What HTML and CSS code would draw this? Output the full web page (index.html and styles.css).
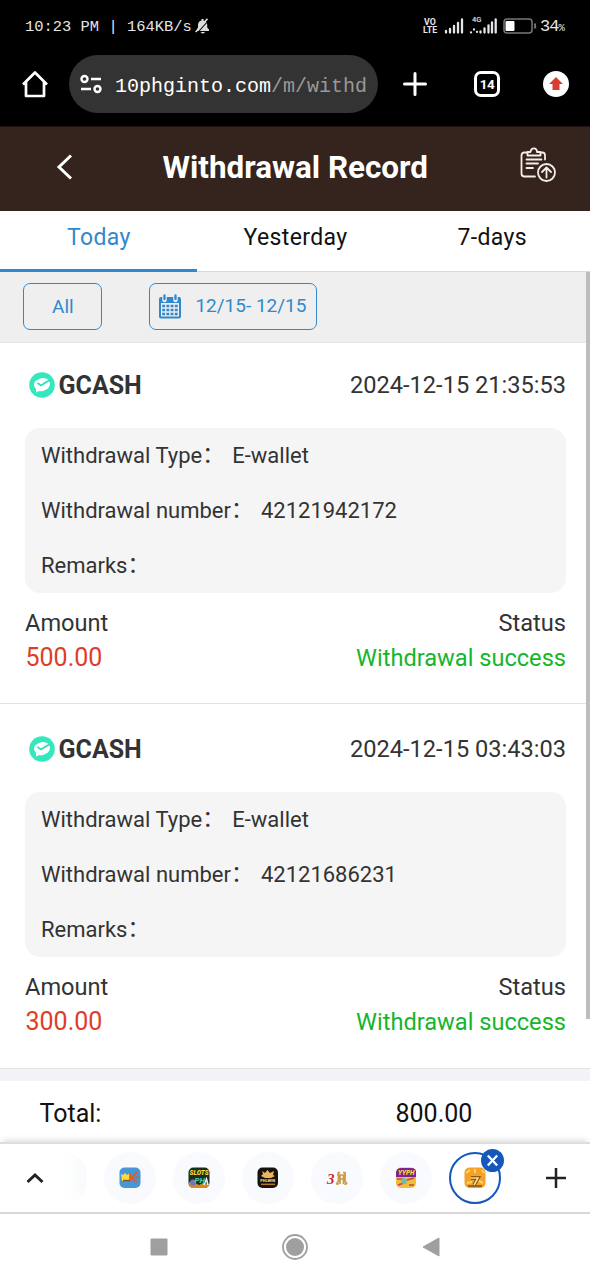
FILE: index.html
```html
<!DOCTYPE html>
<html lang="en">
<head>
<meta charset="utf-8">
<title>Withdrawal Record</title>
<link rel="stylesheet" href="styles.css">
</head>
<body>
<div class="phone">
  <div class="status">
    <span class="clock">10:23 PM | 164KB/s</span>
    <svg class="mute" width="15" height="17" viewBox="0 0 15 17"><path d="M2 13V11L3 9.500V6.500Q3.500 3 6.500 2.500V1H8.500V2.500Q12 3 12.200 6.500V9.500L14 11.500V13Z M5.500 14H10Q8 17 5.500 14Z" fill="#ddd"/><path d="M1.800 15.500L14 2" stroke="#000" stroke-width="1.100"/><path d="M.7 14L12.500 .8" stroke="#ddd" stroke-width="1.700"/></svg>
    <span class="volte"><span>VO</span><span>LTE</span></span>
    <svg class="signal" width="20" height="16" viewBox="0 0 20 16"><path d="M2 13v1.500M6 11v3.500M10 8v6.500M14 5v9.500M18 1.500v13" stroke="#e5e5e5" stroke-width="2.300" stroke-linecap="round"/></svg>
    <span class="data"><span class="gen">4G</span><svg width="28" height="16" viewBox="0 0 28 16"><path d="M2 14.300v.1M5 11.500v.1M8 13.800v.1M11.500 13.500v1M15.500 10.500v4M19.500 7.500v7M23 4.500v10M26.700 1.500v13" stroke="#e5e5e5" stroke-width="2.300" stroke-linecap="round"/></svg></span>
    <svg class="battery" width="34" height="16" viewBox="0 0 34 16"><rect x="1" y="1" width="28" height="14" rx="3" fill="none" stroke="#777" stroke-width="1.500"/><rect x="2.500" y="3" width="9" height="10" rx="1" fill="#fff"/><path d="M31.500 5.500Q33 8 31.500 10.500" fill="none" stroke="#777" stroke-width="1.800"/></svg>
    <span class="percent">34<small>%</small></span>
  </div>
  <div class="browser">
    <svg class="home" width="28" height="28" viewBox="0 0 28 28"><path d="M2 14.500L14 2.500L26 14.500M5 12V26H23V12" fill="none" stroke="#fff" stroke-width="2.700" stroke-linejoin="round"/></svg>
    <div class="url">
      <svg width="22" height="20" viewBox="0 0 22 20" fill="none" stroke="#fff" stroke-width="2.400"><circle cx="4.500" cy="5" r="3"/><path d="M11 5H21M1 15H11"/><circle cx="17.500" cy="15" r="3"/></svg>
      <span class="address">10phginto.com<span>/m/withd</span></span>
    </div>
    <svg class="newtab" width="24" height="24" viewBox="0 0 24 24"><path d="M12 1.500V22.500M1.500 12H22.500" stroke="#fff" stroke-width="3" stroke-linecap="round"/></svg>
    <span class="tabcount">14</span>
    <svg class="update" width="26" height="26" viewBox="0 0 26 26"><circle cx="13" cy="13" r="13" fill="#fff"/><path d="M13 6L20 13H16.500V19H9.500V13H6Z" fill="#d83c33"/></svg>
  </div>
  <header class="header">
    <svg class="back" width="18" height="28" viewBox="0 0 18 28"><path d="M16 2.500L4 14L16 25.500" fill="none" stroke="#fff" stroke-width="3"/></svg>
    <h1>Withdrawal Record</h1>
    <svg class="records" width="36" height="36" viewBox="0 0 36 36" fill="none" stroke="#f5eee8" stroke-width="1.800" stroke-linecap="round" stroke-linejoin="round"><path d="M7.500 5.500H4.500Q1.500 5.500 1.500 8.500V26.500Q1.500 29.500 4.500 29.500H15M20.500 5.500H22.500Q25 5.500 25 8.500V12.500M7.500 8.500V5H10.500Q11 1.300 14 1.300Q16.800 1.300 17 5H20.500V8.500ZM6.500 12.500H21.500M6.500 16.500H18M6.500 21H13"/><circle cx="26.500" cy="25.500" r="8.500"/><path d="M26.500 30.500V20.500M22 25L26.500 20.500L31 25"/></svg>
  </header>
  <nav class="tabs"><span class="active"><b>Today</b></span><span><b>Yesterday</b></span><span><b>7-days</b></span></nav>
  <div class="content">
    <div class="scrollthumb"></div>
    <div class="filters">
      <span class="filter all">All</span>
      <span class="filter date"><svg width="22" height="25" viewBox="0 0 22 25"><path d="M2 3H20Q22 3 22 5V22.500Q22 24.500 20 24.500H2Q0 24.500 0 22.500V5Q0 3 2 3Z" fill="#3189cc"/><path d="M2 9H20V22.500H2Z" fill="#efefef"/><path d="M5.500 1V6M16.500 1V6" stroke="#efefef" stroke-width="4.500" stroke-linecap="round"/><path d="M5.500 1.500V5M16.500 1.500V5" stroke="#3189cc" stroke-width="2.300" stroke-linecap="round"/><path d="M3.200 12H19M3.200 16H19M3.200 20H19" stroke="#3189cc" stroke-width="2.600" stroke-dasharray="2.900 1.300"/></svg><em>12/15- 12/15</em></span>
    </div>
    <section class="record">
      <div class="row top"><div class="brand"><svg width="28" height="28" viewBox="0 0 28 28"><circle cx="14" cy="14" r="12.800" fill="#35e7bd"/><path d="M8 21.500V18Q4.500 14 7 10.500Q14 4.500 20 8.500Q24 13.500 20 17.500Q15 21 11 20Z" fill="#fff"/><path d="M9.500 12L13 14.500L21 9.500" stroke="#35dcba" stroke-width="1.800" fill="none"/></svg><strong>GCASH</strong></div><time>2024-12-15 21:35:53</time></div>
      <div class="details"><div><span>Withdrawal Type</span><i>：</i><span>E-wallet</span></div><div><span>Withdrawal number</span><i>：</i><span>42121942172</span></div><div><span>Remarks</span><i>：</i></div></div>
      <div class="row captions"><span>Amount</span><span>Status</span></div>
      <div class="row result"><span class="amount">500.00</span><span class="success">Withdrawal success</span></div>
    </section>
    <section class="record">
      <div class="row top"><div class="brand"><svg width="28" height="28" viewBox="0 0 28 28"><circle cx="14" cy="14" r="12.800" fill="#35e7bd"/><path d="M8 21.500V18Q4.500 14 7 10.500Q14 4.500 20 8.500Q24 13.500 20 17.500Q15 21 11 20Z" fill="#fff"/><path d="M9.500 12L13 14.500L21 9.500" stroke="#35dcba" stroke-width="1.800" fill="none"/></svg><strong>GCASH</strong></div><time>2024-12-15 03:43:03</time></div>
      <div class="details"><div><span>Withdrawal Type</span><i>：</i><span>E-wallet</span></div><div><span>Withdrawal number</span><i>：</i><span>42121686231</span></div><div><span>Remarks</span><i>：</i></div></div>
      <div class="row captions"><span>Amount</span><span>Status</span></div>
      <div class="row result"><span class="amount">300.00</span><span class="success">Withdrawal success</span></div>
    </section>
    <div class="total"><span class="total-label">Total:</span><span>800.00</span></div>
  </div>
  <div class="strip">
    <svg class="expand" width="18" height="12" viewBox="0 0 18 12"><path d="M1.500 10L9 3L16.500 10" fill="none" stroke="#222" stroke-width="3"/></svg>
    <div class="sites">
      <span class="site cut"></span>
      <span class="site"><svg width="22" height="22" viewBox="0 0 22 22"><rect x=".5" y=".5" width="21" height="20.500" rx="5" fill="#4796d5"/><path d="M2 7L4 8L6 6L8 8L11 6V14H3Z" fill="#ffd83c"/><path d="M11 6V15M19 4L12 11L18 15M12 11L21 10" stroke="#e45b22" stroke-width="1.700" fill="none"/><path d="M4 13.500H11" stroke="#7b5132" stroke-width="1.300"/></svg></span>
      <span class="site"><svg width="22" height="22" viewBox="0 0 22 22"><rect x=".5" y=".5" width="21" height="20.500" rx="5" fill="#16301f"/><path d="M1 15L7 16L11 18L15 16L21 17V18Q20 21 17 21H5Q1 21 1 17Z" fill="#d18b26"/><circle cx="5" cy="15.500" r="3" fill="#7375ba"/><path d="M16 18L18.500 12L20 18" stroke="#eef" stroke-width="1.500" fill="none"/><text x="1.500" y="8" class="icon-yellow">SLOTS</text><text x="6.500" y="15.500" class="icon-green">PH</text></svg></span>
      <span class="site"><svg width="22" height="22" viewBox="0 0 22 22"><rect x=".5" y=".5" width="20.500" height="20.500" rx="5" fill="#17120d"/><path d="M5 4L8 6L10.500 3L13 6L17 4L16 8L18 9L14 11H8L4 9L6 7Z" fill="#edb45a"/><text x="3.200" y="15" class="icon-cream">PHLWIN</text><path d="M4 17.300H18" stroke="#b27826" stroke-width="1.500"/></svg></span>
      <span class="site"><svg width="22" height="22" viewBox="0 0 22 22"><text x="1" y="16.500" class="icon-red">3</text><path d="M11.500 5.500H14M17 5.500H19.500M11 8H20M12.500 5V14L10.500 17M14 8V17M17.500 8V17M19 5V14L21 17M10 17H13M18 17H21M14 12H17" fill="none" stroke="#c99c45" stroke-width="1.700"/></svg></span>
      <span class="site"><svg width="22" height="22" viewBox="0 0 22 22"><rect x="1" y=".5" width="20" height="20.500" rx="5" fill="#f0bf39"/><path d="M1 10V5Q2 1 6 1H16Q21 1 21 5V10Z" fill="#79258d"/><text x="3" y="8" class="icon-yellow">YYPH</text><path d="M2 12H9M12 13L19 11M3 18L9 16M14 18H19" stroke="#cb3e5b" stroke-width="1.700"/><circle cx="9" cy="14" r="3" fill="#7db5b2"/></svg></span>
      <span class="site selected"><svg width="22" height="22" viewBox="0 0 22 22"><rect x=".5" y=".5" width="21" height="20.500" rx="5" fill="#f4a128"/><path d="M2 6L6 3M11 2V6M18 3L20 6M3 16L8 15M15 14L19 16" stroke="#ffd56b" stroke-width="2"/><path d="M7 11H14L10 18" fill="none" stroke="#664018" stroke-width="3.500"/><path d="M7 11H14L10 18" fill="none" stroke="#ffdf83" stroke-width="1.700"/><path d="M4 19H18" stroke="#805220" stroke-width="1.500"/></svg><svg class="close" width="23" height="23" viewBox="0 0 23 23"><circle cx="11.500" cy="11.500" r="11.500" fill="#1457bd"/><path d="M6.800 6.500L16.200 16.500M16.200 6.500L6.800 16.500" stroke="#fff" stroke-width="2.300"/></svg></span>
    </div>
    <svg class="add" width="20" height="20" viewBox="0 0 20 20"><path d="M10 0V20M0 10H20" stroke="#222" stroke-width="2.500"/></svg>
  </div>
  <div class="android">
    <svg width="18" height="18" viewBox="0 0 18 18"><rect x=".5" y=".5" width="17" height="17" rx="1" fill="#9f9f9f"/></svg>
    <svg width="26" height="26" viewBox="0 0 26 26"><circle cx="13" cy="13" r="12" fill="none" stroke="#9f9f9f" stroke-width="1.800"/><circle cx="13" cy="13" r="9" fill="#9f9f9f"/></svg>
    <svg width="18" height="20" viewBox="0 0 18 20"><path d="M17 1V19L1 10Z" fill="#9f9f9f" stroke="#9f9f9f" stroke-linejoin="round"/></svg>
  </div>
</div>
</body>
</html>
```
FILE: styles.css
```css
* { box-sizing: border-box; }
body { margin: 0; background: #fff; color: #333; font-family: Roboto, sans-serif; }
svg { display: block; flex: none; }
span, time, strong, b { white-space: nowrap; }
.phone { width: 590px; height: 1280px; overflow: hidden; display: flex; flex-direction: column; }
.status { height: 55px; background: #000; color: #e5e5e5; display: flex; align-items: center; padding: 0 24px 3px 25px; flex: none; }
.clock { font: 15.45px/20px "Liberation Mono", monospace; width: 168px; padding-top: 2px; }
.mute { margin-left: 2px; }
.volte { display: flex; flex-direction: column; align-items: center; font: 700 8.8px/8px Roboto, sans-serif; margin-left: 212px; width: 16px; }
.signal { margin-left: 6px; }
.data { position: relative; margin-left: 5px; }
.gen { position: absolute; left: 3px; top: -2px; font: 500 7.5px/8px Roboto, sans-serif; }
.battery { margin-left: 6px; }
.percent { font: 17px/20px "Liberation Mono", monospace; letter-spacing: -1px; margin-left: 3px; padding-top: 3px; }
.percent small { font-size: 10.5px; }
.browser { height: 71px; background: #000; display: flex; align-items: center; padding: 0 21px 13px; flex: none; }
.url { width: 309px; height: 58px; border-radius: 29px; background: #333; margin-left: 20px; padding-left: 11px; display: flex; align-items: center; }
.address { color: #fff; font: 20px/28px "Liberation Mono", monospace; margin-left: 13px; padding-top: 5px; }
.address span { color: #999; }
.newtab { margin-left: 25px; }
.tabcount { width: 26px; height: 26px; margin-left: 47px; border: 3px solid #fff; border-radius: 7px; color: #fff; font: 700 13.5px/20px Roboto, sans-serif; letter-spacing: -.5px; text-align: center; }
.update { margin-left: 43px; }
.header { height: 85px; background: #35231d; border-top: 1px solid #201510; display: flex; align-items: center; padding: 0 34px 4px 55px; flex: none; }
.header h1 { color: #fff; font-size: 31.4px; line-height: 40px; margin: 1px 0 0 89.5px; width: 268px; white-space: nowrap; }
.records { margin-left: 90.5px; margin-top: -5px; }
.tabs { height: 61px; display: grid; grid-template-columns: repeat(3, 1fr); border-bottom: 1px solid #d8d8d8; color: #111; flex: none; }
.tabs span { display: flex; justify-content: center; padding: 12px 0 0 1px; font-size: 23px; line-height: 30px; }
.tabs b { font-weight: 400; letter-spacing: .35px; }
.tabs .active { color: #3189cc; border-bottom: 3px solid #3189cc; height: 61px; }
.content { position: relative; flex: none; height: 870px; }
.scrollthumb { position: absolute; right: 0; top: 0; width: 4px; height: 747px; background: #bdbdbd; }
.filters { height: 71px; background: #efefef; border-bottom: 1px solid #e6e6e6; display: flex; padding: 11px 23.4px; gap: 47px; }
.filter { height: 47px; border: 1px solid #3189cc; border-radius: 7px; display: flex; align-items: center; color: #3189cc; font-size: 19px; }
.all { width: 79px; justify-content: center; }
.date { width: 168px; padding-left: 9px; gap: 14px; }
.date svg { margin-top: -1px; }
.date em { font-style: normal; margin-top: -2px; }
.record { height: 361px; border-bottom: 1px solid #e3e3e3; padding: 25px 24px 0 25px; }
.record + .record { height: 365px; padding-top: 28px; }
.row { display: flex; justify-content: space-between; }
.top { height: 34px; align-items: center; font-size: 23.6px; }
.brand { display: flex; align-items: center; gap: 3px; padding-left: 2.5px; }
.brand strong { font-size: 25px; }
.details { height: 165px; margin-top: 26.4px; padding: 0 16px; border-radius: 15px; background: #f5f5f5; font-size: 22px; line-height: 30px; display: grid; grid-template-rows: repeat(3, 1fr); align-items: center; }
.details div { display: flex; height: 30px; }
.details i { font: normal 22px/30px "Noto Sans CJK SC", sans-serif; width: 30px; margin-top: -4px; }
.captions { height: 35px; align-items: center; margin-top: 12px; font-size: 23.6px; }
.result { height: 35px; align-items: center; font-size: 23.6px; }
.amount { color: #df3d26; font-size: 25px; padding-left: .5px; }
.success { color: #16b52c; }
.total { height: 73px; border-top: 12px solid #f3f3f7; display: flex; align-items: center; padding: 4px 0 0 39.5px; color: #111; font-size: 25px; }
.total-label { width: 356px; }
.strip { height: 72px; border-top: 2px solid #ddd; border-bottom: 2px solid #d8d8d8; display: flex; align-items: center; background: #fff; padding-left: 26px; flex: none; box-shadow: 0 -5px 6px -3px #ddd; position: relative; }
.sites { width: 429px; margin-left: 28px; display: flex; justify-content: flex-end; gap: 17px; }
.site { width: 52px; height: 52px; border-radius: 50%; background: #f8fafd; display: flex; align-items: center; justify-content: center; flex: none; }
.cut { width: 24px; border-radius: 0 26px 26px 0; background: linear-gradient(90deg, #fff, #f8fafd); }
.selected { border: 2.5px solid #1457bd; position: relative; background: #fff; }
.close { position: absolute; top: -5px; right: -5px; }
.add { margin-left: 45px; }
.icon-yellow { font: italic 900 6.5px Roboto, sans-serif; fill: #f9d440; }
.icon-green { font: italic 900 8px Roboto, sans-serif; fill: #45c4a7; }
.icon-cream { font: 900 4px Roboto, sans-serif; fill: #f1ce86; }
.icon-red { font: italic 900 15px "Liberation Serif", serif; fill: #c52e2b; }
.android { height: 67px; display: flex; align-items: center; justify-content: center; gap: 114px; padding: 0 0 2px 0; flex: none; }
```
